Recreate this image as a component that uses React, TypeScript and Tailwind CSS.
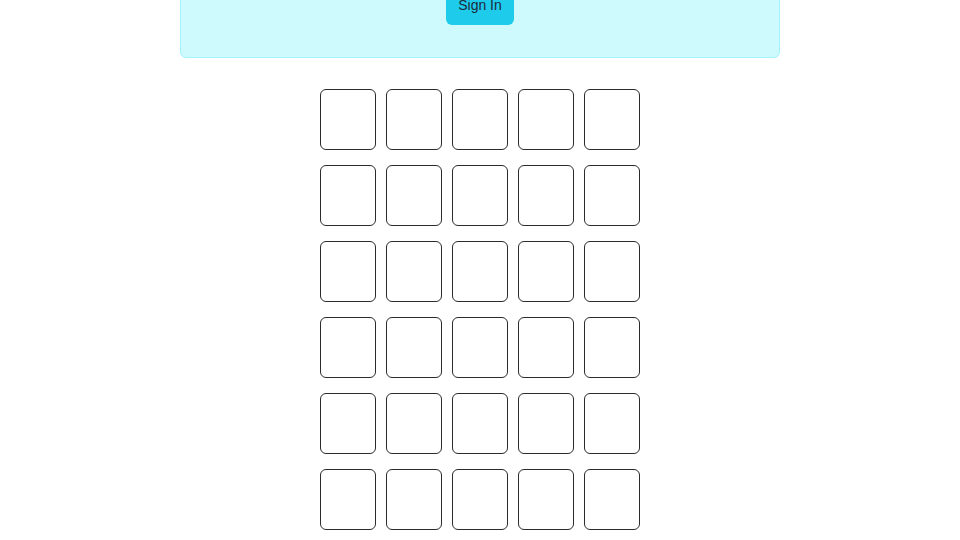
const rows = 6;
const cols = 5;

export default function App() {
  return (
    <div className="min-h-screen bg-white font-['Liberation_Sans',Arial,sans-serif] overflow-hidden">
      {/* Sign-in banner, scrolled partly out of view */}
      <div className="mx-auto -mt-[44px] w-[600px] rounded-md border border-cyan-200 bg-cyan-100 p-8 flex justify-center">
        <button className="rounded-md bg-[#1ecbea] px-3 pt-[6px] pb-[10px] text-sm leading-5 text-slate-800">
          Sign In
        </button>
      </div>

      {/* Letter grid */}
      <div className="mt-[31px] flex justify-center">
        <div className="grid grid-cols-5 gap-x-[10px] gap-y-[15px]">
          {Array.from({ length: rows * cols }).map((_, i) => (
            <div
              key={i}
              className="h-[61px] w-14 rounded-md border border-[#2b2b2b]"
            />
          ))}
        </div>
      </div>
    </div>
  );
}
